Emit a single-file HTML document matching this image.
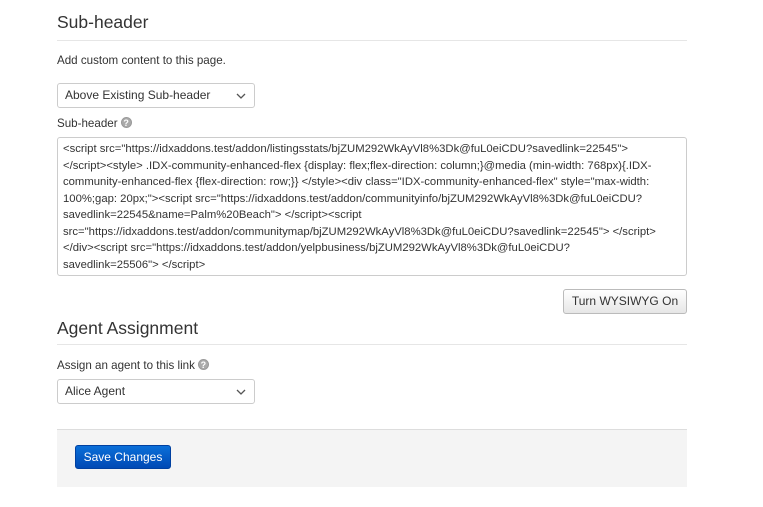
<!DOCTYPE html><html><head><style>
body{margin:0;background:#fff;font-family:"Liberation Sans",Arial,sans-serif;color:#333;width:763px;height:507px;overflow:hidden;position:relative}
.a{position:absolute}
h2{position:absolute;margin:0;font-weight:normal;font-size:17.5px;color:#333}
.hr{position:absolute;left:57px;width:630px;height:1px;background:#e6e6e6}
.t{font-size:11.6px;position:absolute}
.sel{position:absolute;left:57px;border:1px solid #ccc;border-radius:3px;font-size:12px;line-height:23px;padding-left:7px;box-sizing:border-box;width:198px;height:25px}
.sel svg{position:absolute;right:8px;top:9px}
.q{display:inline-block;width:11px;height:11px;border-radius:50%;background:#aaa;color:#fff;font-size:9px;line-height:11px;text-align:center;font-weight:bold;vertical-align:1px;margin-left:3px;border:1px solid #999;box-sizing:border-box}
.ta{position:absolute;left:57px;top:137px;width:630px;height:139px;border:1px solid #ccc;border-radius:3px;box-sizing:border-box;padding:3px 5px;font-size:11.3px;line-height:16.5px;white-space:nowrap;overflow:hidden;color:#333}
</style></head><body>
<h2 style="left:57px;top:12px">Sub-header</h2>
<div class="hr" style="top:40px"></div>
<div class="t" style="left:57px;top:54px">Add custom content to this page.</div>
<div class="sel" style="top:83px">Above Existing Sub-header<svg width="10" height="6"><path d="M1 1l4 4 4-4" stroke="#555" stroke-width="1.3" fill="none"/></svg></div>
<div class="t" style="left:57px;top:117px">Sub-header<span class="q">?</span></div>
<div class="ta">&lt;script src="https://idxaddons.test/addon/listingsstats/bjZUM292WkAyVl8%3Dk@fuL0eiCDU?savedlink=22545"&gt;<br>&lt;/script&gt;&lt;style&gt; .IDX-community-enhanced-flex {display: flex;flex-direction: column;}@media (min-width: 768px){.IDX-<br>community-enhanced-flex {flex-direction: row;}} &lt;/style&gt;&lt;div class="IDX-community-enhanced-flex" style="max-width:<br>100%;gap: 20px;"&gt;&lt;script src="https://idxaddons.test/addon/communityinfo/bjZUM292WkAyVl8%3Dk@fuL0eiCDU?<br>savedlink=22545&amp;name=Palm%20Beach"&gt; &lt;/script&gt;&lt;script<br>src="https://idxaddons.test/addon/communitymap/bjZUM292WkAyVl8%3Dk@fuL0eiCDU?savedlink=22545"&gt; &lt;/script&gt;<br>&lt;/div&gt;&lt;script src="https://idxaddons.test/addon/yelpbusiness/bjZUM292WkAyVl8%3Dk@fuL0eiCDU?<br>savedlink=25506"&gt; &lt;/script&gt;</div>
<div class="a" style="left:563px;top:289px;width:124px;height:25px;border:1px solid #bbb;border-radius:3px;box-sizing:border-box;background:linear-gradient(#fff,#e6e6e6);font-size:12px;text-align:center;line-height:23px">Turn WYSIWYG On</div>
<h2 style="left:57px;top:318px">Agent Assignment</h2>
<div class="hr" style="top:344px"></div>
<div class="t" style="left:57px;top:359px">Assign an agent to this link<span class="q">?</span></div>
<div class="sel" style="top:379px">Alice Agent<svg width="10" height="6"><path d="M1 1l4 4 4-4" stroke="#555" stroke-width="1.3" fill="none"/></svg></div>
<div class="a" style="left:57px;top:429px;width:630px;height:58px;background:#f4f4f4;border-top:1px solid #ddd;box-sizing:border-box"></div>
<div class="a" style="left:75px;top:445px;width:96px;height:24px;border-radius:3px;background:linear-gradient(#0a6fd8,#0049b5);border:1px solid #0040a0;box-sizing:border-box;color:#fff;font-size:12px;text-align:center;line-height:22px">Save Changes</div>
</body></html>
